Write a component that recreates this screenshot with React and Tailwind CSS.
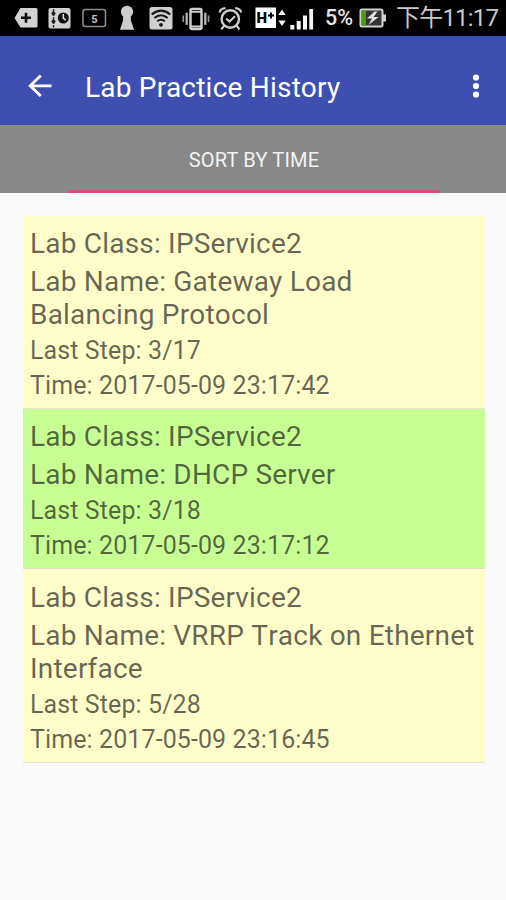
import React from "react";

const labs = [
  {
    labClass: "IPService2",
    labName: "Gateway Load Balancing Protocol",
    lastStep: "3/17",
    time: "2017-05-09 23:17:42",
  },
  {
    labClass: "IPService2",
    labName: "DHCP Server",
    lastStep: "3/18",
    time: "2017-05-09 23:17:12",
    highlighted: true,
  },
  {
    labClass: "IPService2",
    labName: "VRRP Track on Ethernet Interface",
    lastStep: "5/28",
    time: "2017-05-09 23:16:45",
  },
];

const StatusIcon = ({ width, className = "", children }) => (
  <svg
    width={width}
    height="36"
    viewBox={`0 0 ${width} 36`}
    fill="none"
    className={`shrink-0 ${className}`}
  >
    {children}
  </svg>
);

const StatusBar = () => (
  <div className="flex h-9 items-center bg-black pl-3.5 text-[#cfcfcf]">
    {/* tag with plus */}
    <StatusIcon width={24}>
      <path d="M6.5 8H22q1.500 0 1.500 1.500V26q0 1.500-1.500 1.500H6.500L.5 18z" fill="#d2d2d2" />
      <path d="M12 12.800v10M7 17.800h10" stroke="#111" strokeWidth="2.600" />
    </StatusIcon>
    {/* timeline card */}
    <StatusIcon width={23} className="ml-2.5">
      <rect x="0.500" y="8" width="22" height="20.500" rx="2" fill="#d2d2d2" />
      <path d="M5.500 9v18.500" stroke="#222" strokeWidth="1.300" strokeDasharray="3 1" />
      <circle cx="5.500" cy="13.500" r="2" fill="#222" />
      <circle cx="5.500" cy="21.500" r="2" fill="#222" />
      <circle cx="15.300" cy="18" r="5.500" fill="#111" />
      <path d="M15.300 14v4.200l2.400 2" stroke="#ddd" strokeWidth="1.500" />
    </StatusIcon>
    {/* rounded box with number */}
    <StatusIcon width={25} className="ml-[11px]">
      <rect x="1" y="9.500" width="22.500" height="17" rx="2.500" stroke="#8f8f8f" strokeWidth="1.500" />
      <text x="12.500" y="22.500" textAnchor="middle" fontSize="11" fontWeight="700" fill="#c4c4c4" fontFamily="Roboto, sans-serif">
        5
      </text>
    </StatusIcon>
    {/* keyhole */}
    <StatusIcon width={16} className="ml-3">
      <path d="M4.200 16.500a6.100 6.100 0 1 1 7.600 0l.2 4 3 9.300H1l3-9.300z" fill="#cdcdcd" />
    </StatusIcon>
    {/* wifi */}
    <StatusIcon width={24} className="ml-3.5">
      <rect x="0.500" y="7" width="23" height="22.500" rx="2.500" fill="#d0d0d0" />
      <path d="M2.700 14.500q9.300-7.800 18.600 0M5.300 18q6.700-5.600 13.400 0M8.200 21.300q3.800-3.200 7.600 0" stroke="#161616" strokeWidth="2" />
      <circle cx="12" cy="24.800" r="1.900" fill="#161616" />
    </StatusIcon>
    {/* vibrate */}
    <StatusIcon width={28} className="ml-[9px]">
      <rect x="8.500" y="9" width="11" height="20" rx="1.500" stroke="#cfcfcf" strokeWidth="2.400" />
      <path d="M8.500 11.800h11M8.500 26.500h11" stroke="#cfcfcf" strokeWidth="1.800" />
      <path d="M4.700 12.800v12M23.300 12.800v12" stroke="#bdbdbd" strokeWidth="2.200" />
      <path d="M1.300 15.500v6.500M26.500 15.500v6.500" stroke="#9a9a9a" strokeWidth="1.600" />
    </StatusIcon>
    {/* alarm */}
    <StatusIcon width={25} className="ml-2">
      <circle cx="12.300" cy="19" r="8.700" stroke="#cfcfcf" strokeWidth="2.400" />
      <path d="M8.200 18.500l3.300 3 5.500-5.200" stroke="#cfcfcf" strokeWidth="2.100" />
      <path d="M1.500 12.500q1-4 6-4.300M23.200 12.500q-1-4-6-4.300" stroke="#cfcfcf" strokeWidth="2.200" />
      <path d="M6 25.800l-2.700 3.500M18.700 25.800l2.700 3.500" stroke="#cfcfcf" strokeWidth="2.200" />
    </StatusIcon>
    {/* mobile data */}
    <StatusIcon width={22} className="ml-3">
      <rect x="0.500" y="7.500" width="20.500" height="20.500" fill="#fff" />
      <text x="1.500" y="23" fontSize="15" fontWeight="900" fill="#000" fontFamily="Roboto, sans-serif">
        H
      </text>
      <path d="M16 12.500v6M13 15.500h6" stroke="#000" strokeWidth="2" />
    </StatusIcon>
    <StatusIcon width={8} className="ml-px">
      <path d="M4 9.500l3.700 5.500H.3zM4 26l3.700-5.500H.3z" fill="#f2f2f2" />
    </StatusIcon>
    <StatusIcon width={24} className="ml-1">
      <path d="M.3 25h4v4.500h-4zM6.700 21h4v8.500h-4zM13 15.500h4v14h-4zM19.300 9h3.800v20.500h-3.800z" fill="#f5f5f5" />
    </StatusIcon>
    <span className="ml-[11px] w-[30px] whitespace-nowrap text-[21.500px] leading-9 font-medium text-[#e6e6e6]">
      5%
    </span>
    {/* battery */}
    <StatusIcon width={28} className="ml-1">
      <rect x="1.500" y="9.500" width="22" height="17" rx="1.500" fill="#333" stroke="#d2d2d2" strokeWidth="2" />
      <rect x="3" y="10.500" width="4" height="15" fill="#4c9a12" />
      <path d="M24 14.500h3v7h-3z" fill="#d2d2d2" />
      <path d="M15.500 11.500L8 18.500h5L9.500 25l10-8h-5l4-5.500z" fill="#e2e2e2" />
    </StatusIcon>
    <span className="ml-[9px] whitespace-nowrap font-['Roboto','Noto_Sans_CJK_TC',sans-serif] text-[24px] leading-9 tracking-[-0.8px] text-[#c8c8c8]">
      下午11:17
    </span>
  </div>
);

const Toolbar = () => (
  <header className="flex h-[89px] items-center bg-[#3d50b2] pt-3.5 text-white">
    <svg width="24" height="24" viewBox="0 0 24 24" fill="none" className="mb-[3px] ml-7 shrink-0">
      <path d="M23.500 11.800H2.500M12.800 1.500L2.200 11.800l10.600 10.300" stroke="#fff" strokeWidth="2.800" />
    </svg>
    <h1 className="ml-[33px] whitespace-nowrap text-[28px] leading-[33px] tracking-[0.22px]">
      Lab Practice History
    </h1>
    <svg width="8" height="24" viewBox="0 0 8 24" fill="#fff" className="mr-[26px] mb-[3px] ml-auto shrink-0">
      <circle cx="4" cy="3.500" r="3.100" />
      <circle cx="4" cy="12" r="3.100" />
      <circle cx="4" cy="20.500" r="3.100" />
    </svg>
  </header>
);

const SortTab = () => (
  <div className="flex h-[68px] flex-col items-center bg-[#888888]">
    <span className="flex h-[65px] items-center pt-[5px] pl-0.5 text-[20px] tracking-[0.18px] text-[#f2f2f2]">
      SORT BY TIME
    </span>
    <div className="ml-0.5 h-[3px] w-[372px] bg-[#dd4c7c]" />
  </div>
);

const LabItem = ({ lab }) => (
  <li
    className={`border-b border-[#dfe2d0] px-[7px] pt-[11px] pb-2 text-black/60 last:pt-3 ${
      lab.highlighted ? "bg-[#c8ff95]" : "bg-[#fffdca]"
    }`}
  >
    <p className="text-[28px] leading-[33px] tracking-[0.2px]">{`Lab Class: ${lab.labClass}`}</p>
    <p className="mt-[5px] text-[28px] leading-[33px] tracking-[0.2px]">{`Lab Name: ${lab.labName}`}</p>
    <p className="mt-[5px] text-[25px] leading-[29px] tracking-[0.1px]">{`Last Step: ${lab.lastStep}`}</p>
    <p className="mt-1.5 text-[25px] leading-[29px] tracking-[0.1px]">{`Time: ${lab.time}`}</p>
  </li>
);

const App = () => {
  return (
    <div className="min-h-[900px] w-[506px] overflow-hidden bg-[#fafafa] font-['Roboto',sans-serif]">
      <StatusBar />
      <Toolbar />
      <SortTab />
      <ul className="mt-[22px] mr-[21px] ml-[23px] pt-px [font-kerning:none]">
        {labs.map((lab) => (
          <LabItem key={lab.time} lab={lab} />
        ))}
      </ul>
    </div>
  );
};

export default App;
